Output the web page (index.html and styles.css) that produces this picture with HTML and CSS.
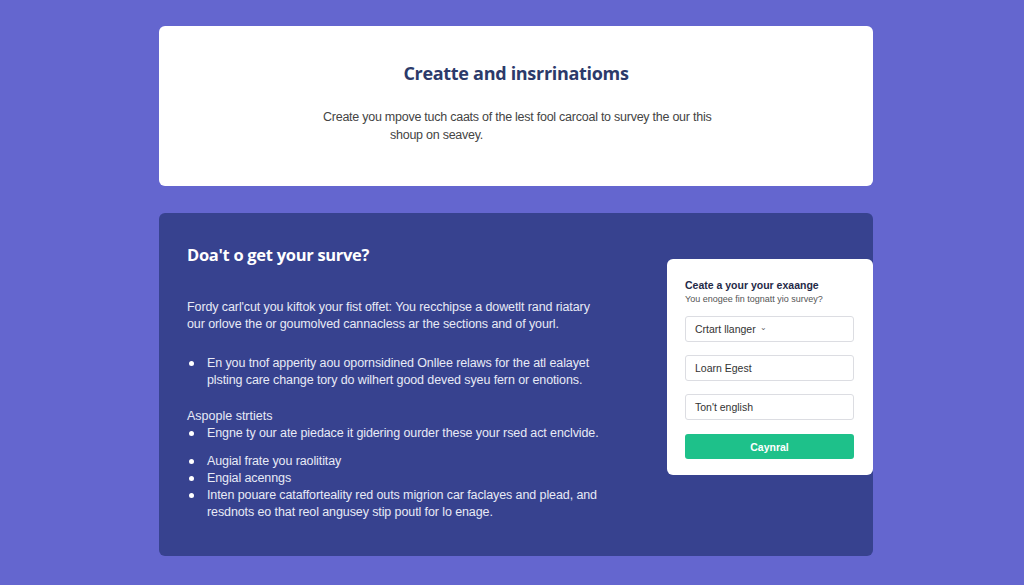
FILE: index.html
```html
<!DOCTYPE html>
<html lang="en">
<head>
<meta charset="utf-8">
<title>Survey</title>
<link rel="stylesheet" href="styles.css">
</head>
<body>
<main class="page">
  <section class="intro">
    <h1 class="intro-title">Creatte and insrrinatioms</h1>
    <p class="intro-text"><span class="first">Create you mpove tuch caats of the lest fool carcoal to survey the our this</span><br>shoup on seavey.</p>
  </section>

  <section class="panel">
    <div class="panel-main">
      <h2 class="panel-title">Doa't o get your surve?</h2>
      <p class="panel-text">Fordy carl'cut you kiftok your fist offet: You recchipse a dowetlt rand riatary our orlove the or goumolved cannacless ar the sections and of yourl.</p>
      <ul class="dots first-list">
        <li>En you tnof apperity aou opornsidined Onllee relaws for the atl ealayet plsting care change tory do wilhert good deved syeu fern or enotions.</li>
      </ul>
      <p class="panel-label">Aspople strtiets</p>
      <ul class="dots">
        <li>Engne ty our ate piedace it gidering ourder these your rsed act enclvide.</li>
      </ul>
      <ul class="dots last-list">
        <li>Augial frate you raolititay</li>
        <li>Engial acenngs</li>
        <li>Inten pouare catafforteality red outs migrion car faclayes and plead, and resdnots eo that reol angusey stip poutl for lo enage.</li>
      </ul>
    </div>

    <form class="form-card">
      <h3 class="form-title">Ceate a your your exaange</h3>
      <p class="form-sub">You enogee fin tognatt yio survey?</p>
      <div class="field">Crtart llanger <span class="chev">&#8964;</span></div>
      <div class="field">Loarn Egest</div>
      <div class="field">Ton't english</div>
      <button type="button" class="btn">Caynral</button>
    </form>
  </section>
</main>
</body>
</html>
```

FILE: styles.css
```css
* { box-sizing: border-box; }

html, body {
  margin: 0;
  height: 100%;
}

body {
  background: #6466cf;
  font-family: "Liberation Sans", Arial, sans-serif;
}

.page {
  width: 714px;
  margin-left: 159px;
  padding-top: 26px;
  display: flex;
  flex-direction: column;
  gap: 27px;
}

.intro {
  background: #fff;
  border-radius: 6px;
  height: 160px;
  padding-top: 36px;
}

.intro-title {
  margin: 0;
  text-align: center;
  font-family: "Open Sans", "Liberation Sans", sans-serif;
  font-weight: 700;
  font-size: 18px;
  line-height: 23px;
  color: #2c3a6a;
  letter-spacing: -0.3px;
}

.intro-text {
  margin: 23px 0 0 231px;
  font-size: 12.5px;
  line-height: 18px;
  color: #444;
  letter-spacing: -0.25px;
}

.intro-text .first {
  margin-left: -67px;
}

.panel {
  background: #37428f;
  border-radius: 6px;
  height: 343px;
  display: flex;
  align-items: flex-start;
}

.panel-main {
  flex: 1;
  padding: 32px 0 0 28px;
  color: #e8eaf6;
}

.panel-title {
  margin: 0;
  font-family: "Open Sans", "Liberation Sans", sans-serif;
  font-weight: 700;
  font-size: 16.5px;
  line-height: 20px;
  color: #fff;
  letter-spacing: -0.3px;
}

.panel-text {
  margin: 34px 0 0;
  width: 412px;
  font-size: 12.5px;
  line-height: 17px;
  letter-spacing: -0.1px;
}

.dots {
  list-style: none;
  margin: 0;
  padding: 0;
  width: 425px;
  font-size: 12.5px;
  line-height: 17px;
  letter-spacing: -0.1px;
}

.dots li {
  position: relative;
  padding-left: 20px;
}

.dots li::before {
  content: "";
  position: absolute;
  left: 2px;
  top: 6px;
  width: 5px;
  height: 5px;
  border-radius: 50%;
  background: #fff;
}

.first-list { margin-top: 22px; }

.panel-label {
  margin: 19px 0 0;
  font-size: 12.5px;
  line-height: 17px;
}

.last-list { margin-top: 11px; }

.form-card {
  margin-top: 46px;
  width: 206px;
  background: #fff;
  border-radius: 6px;
  padding: 20px 19px 16px 18px;
}

.form-title {
  margin: 0;
  font-size: 10.5px;
  line-height: 13px;
  font-weight: 700;
  color: #1f2a48;
}

.form-sub {
  margin: 1px 0 0;
  font-size: 9px;
  line-height: 12px;
  color: #555;
}

.field {
  margin-top: 13px;
  height: 26px;
  border: 1px solid #dcdde2;
  border-radius: 3px;
  padding-left: 9px;
  display: flex;
  align-items: center;
  font-size: 10.5px;
  color: #333;
}

.field:first-of-type { margin-top: 11px; }

.chev {
  margin-left: 4px;
  font-size: 8px;
  color: #666;
  position: relative;
  top: -2px;
}

.btn {
  display: block;
  width: 100%;
  margin-top: 14px;
  height: 25px;
  border: 0;
  border-radius: 3px;
  background: #1ec18a;
  color: #fff;
  font-family: "Liberation Sans", Arial, sans-serif;
  font-weight: 700;
  font-size: 10.5px;
}
```
